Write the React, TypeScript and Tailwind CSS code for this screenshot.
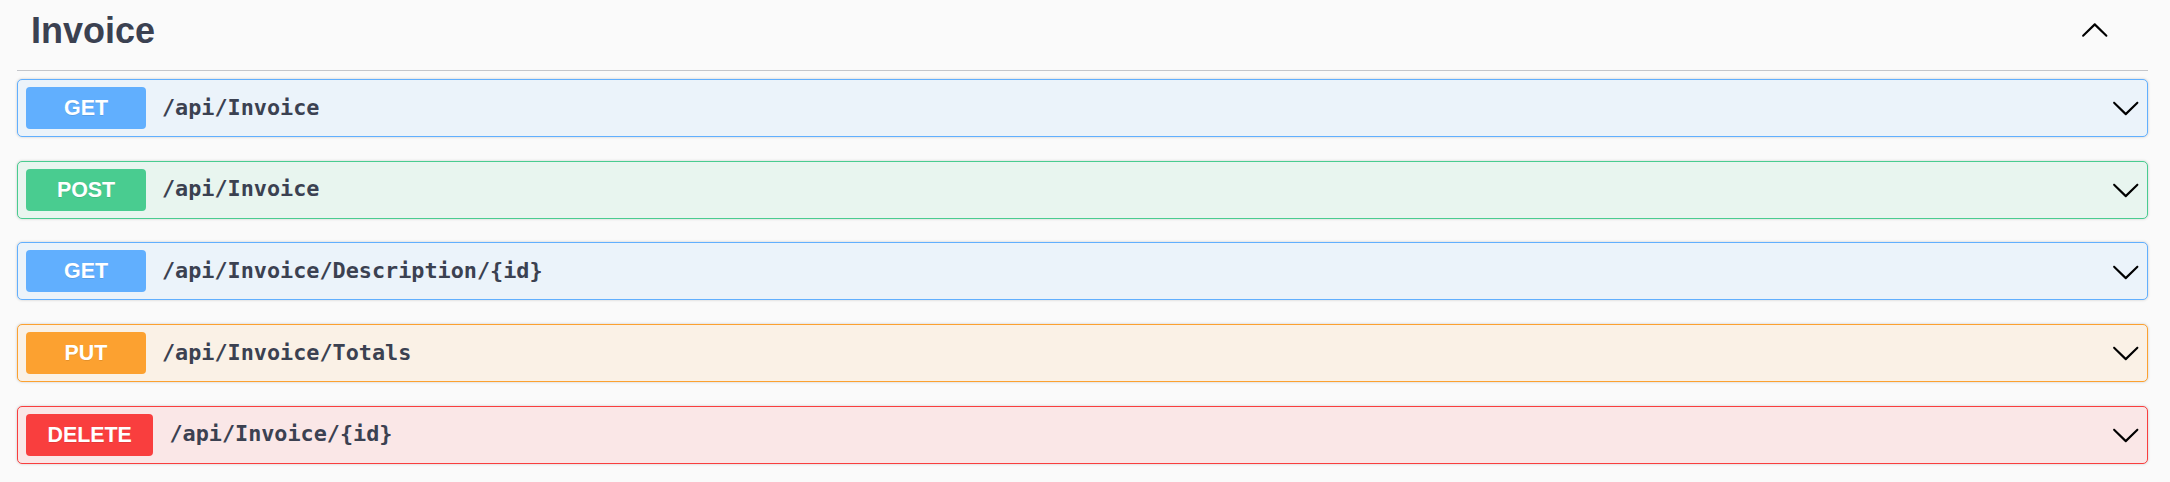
import React from 'react';

type Method = 'GET' | 'POST' | 'PUT' | 'DELETE';

interface Operation {
  method: Method;
  path: string;
}

const operations: Operation[] = [
  { method: 'GET', path: '/api/Invoice' },
  { method: 'POST', path: '/api/Invoice' },
  { method: 'GET', path: '/api/Invoice/Description/{id}' },
  { method: 'PUT', path: '/api/Invoice/Totals' },
  { method: 'DELETE', path: '/api/Invoice/{id}' },
];

// block border + tint, badge fill
const methodStyles: Record<Method, { block: string; badge: string }> = {
  GET: { block: 'border-[#61affe] bg-[#ebf3fa]', badge: 'bg-[#61affe]' },
  POST: { block: 'border-[#49cc90] bg-[#e8f5ef]', badge: 'bg-[#49cc90]' },
  PUT: { block: 'border-[#fca130] bg-[#faf1e6]', badge: 'bg-[#fca130]' },
  DELETE: { block: 'border-[#f93e3e] bg-[#fae7e7]', badge: 'bg-[#f93e3e]' },
};

function Arrow({ up = false }: { up?: boolean }) {
  return (
    <svg
      width="29.5"
      height="29.5"
      viewBox="0 0 20 20"
      className={up ? 'rotate-180 shrink-0' : 'shrink-0'}
      aria-hidden="true"
    >
      <path
        fill="#000"
        d="M17.418 6.109c.272-.268.709-.268.979 0s.271.701 0 .969l-7.908 7.83c-.27.268-.707.268-.979 0l-7.908-7.83c-.27-.268-.27-.701 0-.969.271-.268.709-.268.979 0L10 13.25l7.418-7.141z"
      />
    </svg>
  );
}

function OperationRow({ op }: { op: Operation }) {
  const s = methodStyles[op.method];
  return (
    <div
      className={`flex h-[58px] items-center rounded-[5px] border pl-[8px] pr-[7px] shadow-[0_0_3px_rgba(0,0,0,0.19)] ${s.block}`}
    >
      <span
        className={`flex h-[42px] min-w-[120px] items-center justify-center rounded-[4px] px-[21.5px] text-[21.4px] font-bold text-white [font-family:'Liberation_Sans',Arial,sans-serif] [text-shadow:0_1px_0_rgba(0,0,0,0.1)] ${s.badge}`}
      >
        {op.method}
      </span>
      <span className="ml-4 flex-1 text-[21.8px] font-bold text-[#3b4151] [font-family:'DejaVu_Sans_Mono',monospace]">
        {op.path}
      </span>
      <Arrow />
    </div>
  );
}

export default function App() {
  return (
    <div className="min-h-[482px] w-full bg-[#fafafa] pl-[17px] pr-[22px]">
      {/* Tag header */}
      <div className="flex h-[71px] items-center border-b border-[#c4c6cb] pb-[8px] pl-[14px] pr-[39px]">
        <h3 className="flex-1 text-[36px] leading-none font-bold text-[#3b4151] [font-family:'Liberation_Sans',Arial,sans-serif]">
          Invoice
        </h3>
        <Arrow up />
      </div>

      {/* Operations */}
      <div className="mt-[8px] flex flex-col gap-[23.67px]">
        {operations.map((op, i) => (
          <OperationRow key={i} op={op} />
        ))}
      </div>
    </div>
  );
}
